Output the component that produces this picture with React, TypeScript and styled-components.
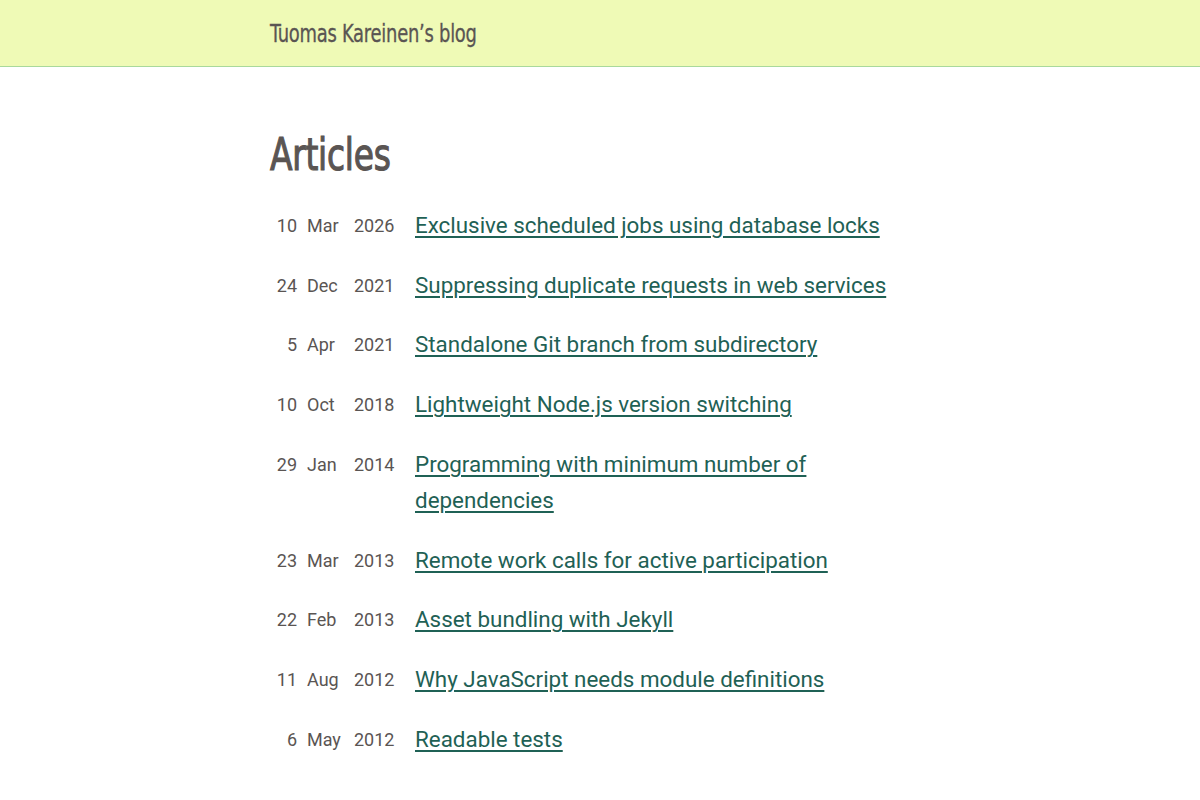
import React from "react";
import styled, { createGlobalStyle } from "styled-components";

const Global = createGlobalStyle`
  html, body { margin: 0; padding: 0; background: #fff; }
  body { font-family: Roboto, "Liberation Sans", sans-serif; color: #5a5553; }
`;

const Header = styled.header`
  background: #effab6;
  border-bottom: 1px solid #a9d99b;
  height: 67px;
  box-sizing: border-box;
`;

const Inner = styled.div`
  width: 660px;
  margin: 0 auto 0 270px;
`;

const HeaderInner = styled(Inner)`
  display: flex;
  align-items: center;
  height: 66px;
`;

const Condensed = `
  font-family: "DejaVu Sans Condensed", "DejaVu Sans", sans-serif;
  display: inline-block;
  transform-origin: left center;
  white-space: nowrap;
`;

const SiteTitle = styled.a`
  ${Condensed}
  transform: scaleX(0.83);
  font-size: 24px;
  color: #5a5553;
  text-decoration: none;
  letter-spacing: -0.3px;
  margin-top: 2px;
  -webkit-text-stroke: 0.3px #5a5553;
`;

const Main = styled(Inner)`
  padding-top: 60px;
`;

const Heading = styled.h1`
  ${Condensed}
  transform: scaleX(0.83);
  font-size: 44px;
  font-weight: normal;
  color: #5a5553;
  margin: 0 0 25px;
  line-height: 56px;
  letter-spacing: -0.3px;
  -webkit-text-stroke: 1.1px #5a5553;
`;

const List = styled.div`
  display: grid;
  grid-template-columns: 27px 47px 50px 505px;
  row-gap: 23.9px;
`;

const DateCell = styled.span<{ $align?: "left" | "right" }>`
  font-size: 18px;
  line-height: 35.84px;
  text-align: ${(p) => p.$align ?? "left"};
  padding-left: ${(p) => (p.$align === "right" ? "0" : "10px")};
  color: #5a5553;
`;

const Title = styled.a`
  font-size: 22.4px;
  line-height: 35.84px;
  color: #1f6155;
  text-decoration: underline;
  text-underline-offset: 3px;
  text-decoration-thickness: 1.5px;
  padding-left: 21px;
`;

const articles = [
  ["10", "Mar", "2026", "Exclusive scheduled jobs using database locks"],
  ["24", "Dec", "2021", "Suppressing duplicate requests in web services"],
  ["5", "Apr", "2021", "Standalone Git branch from subdirectory"],
  ["10", "Oct", "2018", "Lightweight Node.js version switching"],
  ["29", "Jan", "2014", "Programming with minimum number of dependencies"],
  ["23", "Mar", "2013", "Remote work calls for active participation"],
  ["22", "Feb", "2013", "Asset bundling with Jekyll"],
  ["11", "Aug", "2012", "Why JavaScript needs module definitions"],
  ["6", "May", "2012", "Readable tests"],
];

export default function App() {
  return (
    <>
      <Global />
      <Header>
        <HeaderInner>
          <SiteTitle href="#">Tuomas Kareinen’s blog</SiteTitle>
        </HeaderInner>
      </Header>
      <Main>
        <Heading>Articles</Heading>
        <List>
          {articles.map(([d, m, y, t]) => (
            <React.Fragment key={t}>
              <DateCell $align="right">{d}</DateCell>
              <DateCell>{m}</DateCell>
              <DateCell>{y}</DateCell>
              <Title href="#">{t}</Title>
            </React.Fragment>
          ))}
        </List>
      </Main>
    </>
  );
}
